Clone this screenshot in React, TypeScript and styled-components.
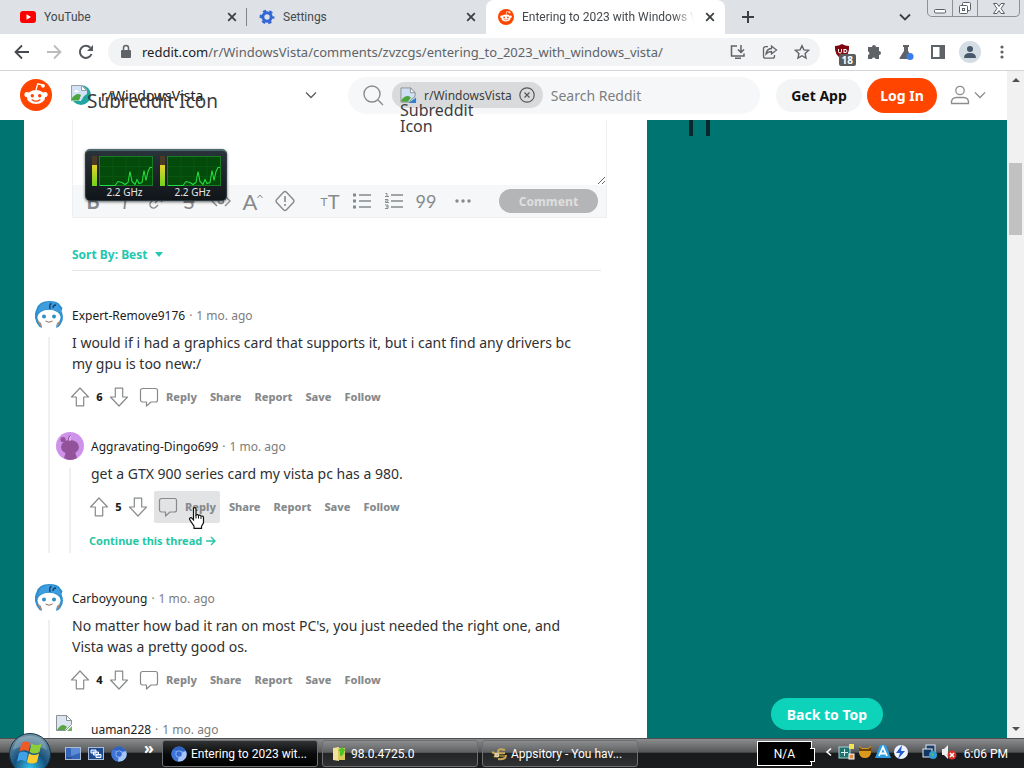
import React from 'react';
import styled, { createGlobalStyle } from 'styled-components';

const ui = '"Noto Sans", "Open Sans", sans-serif';
const TEAL = '#007470';
const MINT = '#0dd3bb';

const GlobalStyle = createGlobalStyle`
  * { box-sizing: border-box; }
  html, body, #root { height: 100%; }
  body { margin: 0; overflow: hidden; font-family: ${ui}; color: #1c1c1c; }
  button, input, textarea { font: inherit; color: inherit; border: 0; padding: 0; margin: 0; background: none; outline: 0; }
  a { color: inherit; text-decoration: none; }
  p, h1 { margin: 0; }
  svg { display: block; flex: none; }
`;

const Screen = styled.div`
  height: 100vh;
  display: flex;
  flex-direction: column;
  position: relative;
  overflow: hidden;
  background: #fff;
`;

/* ---------- browser frame ---------- */
const TabStrip = styled.div`
  height: 34px;
  flex: none;
  display: flex;
  padding-left: 8px;
  background: #dee1e6;
  position: relative;
`;
const Tab = styled.div<{ $active?: boolean; $divider?: boolean }>`
  flex: 0 1 239px;
  min-width: 0;
  display: flex;
  align-items: center;
  gap: 8px;
  padding: 0 7px 0 12px;
  font-family: Roboto, ${ui};
  font-size: 12px;
  color: #45494d;
  border-radius: 8px 8px 0 0;
  background: ${p => (p.$active ? '#fff' : 'transparent')};
  position: relative;
  ${p => p.$divider && `
    &::after { content: ''; position: absolute; right: 0; top: 8px; width: 1px; height: 18px; background: #808488; }
  `}
`;
const TabTitle = styled.span<{ $fade?: boolean }>`
  flex: 1;
  min-width: 0;
  overflow: hidden;
  white-space: nowrap;
  ${p => p.$fade && 'mask-image: linear-gradient(90deg, #000 88%, transparent);'}
`;
const IconButton = styled.button<{ $w?: number }>`
  width: ${p => p.$w ?? 32}px;
  height: 28px;
  flex: none;
  display: flex;
  align-items: center;
  justify-content: center;
  position: relative;
`;
const StripSpacer = styled.div`flex: 1;`;
const TabSearch = styled.div`
  display: flex;
  align-items: center;
  margin-right: 103px;
`;
const NewTab = styled.div`
  display: flex;
  align-items: center;
  margin-left: 7px;
`;
const WindowControls = styled.div`
  position: absolute;
  right: 4px;
  top: 0;
  display: flex;
  height: 17px;
  border: 1px solid #8d9095;
  border-top: 0;
  border-radius: 0 0 5px 5px;
`;
const WindowButton = styled.button<{ $w: number }>`
  width: ${p => p.$w}px;
  display: flex;
  align-items: center;
  justify-content: center;
  & + & { border-left: 1px solid #8d9095; }
`;
const Toolbar = styled.div`
  height: 37px;
  flex: none;
  display: flex;
  align-items: center;
  padding: 0 6px;
  border-bottom: 1px solid #d3d5d8;
`;
const Omnibox = styled.label`
  flex: 1;
  min-width: 0;
  height: 28px;
  margin: 0 6px;
  padding: 0 2px 0 12px;
  display: flex;
  align-items: center;
  border-radius: 14px;
  background: #f1f3f4;
`;
const Address = styled.div`
  flex: 1;
  min-width: 0;
  margin-left: 10px;
  overflow: hidden;
  white-space: nowrap;
  font-size: 13px;
  color: #5f6368;
  b { font-weight: 400; color: #202124; }
`;
const CountBadge = styled.span`
  position: absolute;
  right: 2px;
  bottom: 0;
  padding: 0 3px;
  border-radius: 2px;
  background: #5a5d60;
  color: #fff;
  font-size: 10px;
  line-height: 12px;
  font-weight: 700;
`;
const Profile = styled.span`
  width: 22px;
  height: 22px;
  border-radius: 50%;
  background: #d5dde4;
  display: flex;
  align-items: center;
  justify-content: center;
`;

/* ---------- page ---------- */
const Viewport = styled.div`
  flex: 1;
  min-height: 0;
  display: flex;
`;
const Page = styled.div`
  flex: 1;
  min-width: 0;
  display: flex;
  flex-direction: column;
  position: relative;
`;
const Header = styled.header`
  height: 49px;
  flex: none;
  display: flex;
  align-items: center;
  padding: 0 20px 1px;
  background: #fff;
  position: relative;
  z-index: 2;
`;
const Community = styled.button`
  flex: 0 1 246px;
  margin: 0 31px 0 19px;
  height: 36px;
  display: flex;
  align-items: center;
  gap: 10px;
  position: relative;
  text-align: left;
`;
const CommunityName = styled.span`
  flex: 1;
  font-size: 14px;
`;
const CommunityAlt = styled.span`
  position: absolute;
  left: 16px;
  top: 11px;
  font-size: 19px;
  line-height: 26px;
  white-space: nowrap;
  color: #3c3d3e;
`;
const Search = styled.div`
  flex: 1;
  min-width: 0;
  height: 37px;
  display: flex;
  align-items: center;
  padding-left: 14px;
  border-radius: 19px;
  background: #f6f7f8;
`;
const Chip = styled.div`
  height: 26px;
  margin: 0 8px;
  padding: 0 8px;
  display: flex;
  align-items: center;
  gap: 7px;
  border-radius: 13px;
  background: #d9dadb;
  font-size: 12px;
  color: #3c3d3e;
  position: relative;
`;
const ChipAlt = styled.span`
  position: absolute;
  left: 8px;
  top: 20px;
  width: 80px;
  font-size: 16px;
  line-height: 16px;
`;
const SearchInput = styled.input`
  flex: 1;
  min-width: 0;
  font-size: 14px;
  &::placeholder { color: #7c7f82; opacity: 1; }
`;
const Pill = styled.button<{ $kind: 'plain' | 'login' | 'top' | 'comment' }>`
  flex: none;
  border-radius: 18px;
  font-weight: 700;
  font-size: 14px;
  ${p => p.$kind === 'plain' && 'height: 33px; width: 86px; margin: 0 5px 0 16px; background: #f3f4f5; color: #111;'}
  ${p => p.$kind === 'login' && 'height: 35px; width: 70px; background: #ff4500; color: #fff;'}
  ${p => p.$kind === 'top' && `height: 32px; width: 112px; background: ${MINT}; color: #fff;`}
  ${p => p.$kind === 'comment' && 'height: 24px; width: 99px; background: #b4b5b6; color: #dcdddd; font-size: 12px; font-weight: 800;'}
`;
const UserMenu = styled.button`
  display: flex;
  align-items: center;
  gap: 4px;
  margin: 0 1px 0 13px;
`;
const Body = styled.div`
  flex: 1;
  min-height: 0;
  padding-left: 24px;
  display: grid;
  grid-template-columns: 623fr 360fr;
  background: ${TEAL};
  overflow: hidden;
`;
const Thread = styled.main`
  background: #fff;
  overflow: hidden;
  min-width: 0;
`;
const Backdrop = styled.aside`
  position: relative;
`;
const BannerStroke = styled.i<{ $x: number }>`
  position: absolute;
  left: ${p => p.$x}px;
  top: 0;
  width: 4px;
  height: 16px;
  background: #06282e;
`;
const BackToTop = styled.div`
  position: absolute;
  left: 0;
  right: 0;
  bottom: 8px;
  display: flex;
  justify-content: center;
`;
const Editor = styled.section`
  margin: 0 40px 0 48px;
  border: 1px solid #edeff1;
  border-top: 0;
  display: flex;
  flex-direction: column;
`;
const CommentBox = styled.textarea`
  width: 100%;
  height: 65px;
  resize: vertical;
  display: block;
`;
const EditorBar = styled.div`
  height: 32px;
  padding: 0 8px 0 4px;
  display: flex;
  align-items: center;
  background: #f6f7f8;
  color: #878a8c;
`;
const Tool = styled.button<{ $size?: number; $weight?: number; $italic?: boolean; $strike?: boolean }>`
  flex: 0 1 32px;
  min-width: 0;
  height: 32px;
  display: flex;
  align-items: center;
  justify-content: center;
  font-family: Lato, sans-serif;
  font-size: ${p => p.$size ?? 20}px;
  font-weight: ${p => p.$weight ?? 400};
  font-style: ${p => (p.$italic ? 'italic' : 'normal')};
  text-decoration: ${p => (p.$strike ? 'line-through' : 'none')};
  small { font-size: 12px; align-self: center; }
`;
const ToolGap = styled.span<{ $w: number }>`
  flex: 0 1 ${p => p.$w}px;
`;
const Sort = styled.div`
  margin: 24px 46px 0 48px;
  height: 29px;
  border-bottom: 1px solid #e4e6e8;
  button { display: flex; align-items: center; gap: 6px; height: 24px; font-size: 12px; font-weight: 700; color: #24c7b0; }
`;
const Comments = styled.div`
  padding: 30px 60px 0 11px;
  display: flex;
  flex-direction: column;
  gap: 31px;
`;
const CommentRow = styled.article<{ $nested?: boolean }>`
  display: flex;
  gap: ${p => (p.$nested ? 7 : 9)}px;
  margin: ${p => (p.$nested ? '19px 0 0 -16px' : '0')};
`;
const Gutter = styled.div`
  width: 28px;
  flex: none;
  display: flex;
  flex-direction: column;
  align-items: center;
`;
const ThreadLine = styled.div`
  flex: 1;
  width: 2px;
  margin-top: 8px;
  background: #edeff1;
`;
const CommentMain = styled.div`
  flex: 1;
  min-width: 0;
`;
const Meta = styled.div`
  height: 28px;
  display: flex;
  align-items: center;
  gap: 4px;
  font-size: 12px;
  color: #7c7c7c;
  a { color: #1c1c1c; font-size: 12px; }
`;
const Text = styled.p`
  margin: 3px 0 7px;
  font-size: 14px;
  line-height: 21px;
  color: #2f3031;
`;
const Actions = styled.div`
  height: 32px;
  margin-left: -4px;
  display: flex;
  align-items: center;
  font-size: 11px;
  line-height: 14px;
  font-weight: 800;
  color: #878a8c;
`;
const Vote = styled.button`
  width: 24px;
  height: 24px;
  display: flex;
  align-items: center;
  justify-content: center;
`;
const Score = styled.span`
  width: 15px;
  text-align: center;
  color: #1c1c1c;
`;
const Reply = styled.button<{ $hover?: boolean }>`
  height: 32px;
  margin-left: 4px;
  padding: 0 4px;
  display: flex;
  align-items: center;
  gap: 7px;
  border-radius: 2px;
  background: ${p => (p.$hover ? '#e2e3e4' : 'transparent')};
  position: relative;
`;
const Action = styled.button`
  height: 24px;
  padding: 0 4px;
  margin-left: 5px;
`;
const Pointer = styled.svg`
  position: absolute;
  left: 34px;
  top: 16px;
  z-index: 1;
`;
const Continue = styled.a`
  display: flex;
  align-items: center;
  gap: 4px;
  height: 22px;
  margin: 7px 0 1px -2px;
  font-size: 11px;
  line-height: 14px;
  font-weight: 700;
  color: #24c7a5;
`;
const Scrollbar = styled.div`
  width: 17px;
  flex: none;
  display: flex;
  flex-direction: column;
  align-items: center;
  padding: 6px 0;
  background: #f1f1f1;
`;
const Thumb = styled.div`
  width: 13px;
  height: 72px;
  margin: 80px 0 auto;
  background: #c1c1c1;
`;

/* ---------- desktop ---------- */
const Gadget = styled.div`
  position: absolute;
  left: 85px;
  top: 149px;
  z-index: 3;
  display: flex;
  gap: 7px;
  padding: 5px 5px 0 6px;
  height: 52px;
  border: 1px solid #2c3940;
  border-top: 2px solid #4b686d;
  border-radius: 5px;
  background: linear-gradient(#29333a, #101519);
  box-shadow: 0 1px 3px rgba(0, 0, 0, .6);
`;
const Core = styled.figure`
  margin: 0;
  width: 61px;
  color: #e4e7e8;
  font-size: 10px;
  line-height: 10px;
  text-align: center;
  figcaption { padding-left: 4px; white-space: nowrap; }
`;
const Taskbar = styled.footer`
  height: 30px;
  flex: none;
  display: flex;
  align-items: center;
  position: relative;
  z-index: 4;
  color: #fff;
  font-family: Roboto, ${ui};
  font-size: 12px;
  border-top: 1px solid #4c4e4f;
  background: linear-gradient(#8a8c8d 0, #555758 45%, #17191a 50%, #1b1d1e 100%);
`;
const StartButton = styled.button`
  position: absolute;
  left: 8px;
  top: -6px;
`;
const QuickLaunch = styled.div`
  display: flex;
  align-items: center;
  gap: 7px;
  margin-left: 65px;
  button { display: flex; }
`;
const More = styled.button`
  width: 10px;
  margin: 0 8px 12px 17px;
  font-family: ${ui};
  font-size: 16px;
  line-height: 16px;
  font-weight: 700;
`;
const TaskButton = styled.button<{ $active?: boolean }>`
  flex: 0 1 156px;
  min-width: 0;
  height: 27px;
  margin-right: 4px;
  padding: 0 8px;
  display: flex;
  align-items: center;
  gap: 4px;
  white-space: nowrap;
  border: 1px solid #6d6f70;
  border-radius: 3px;
  background: ${p => (p.$active
    ? 'linear-gradient(#303233, #0b0c0d 50%, #000)'
    : 'linear-gradient(#8b8d8e, #5e6061 45%, #232526 50%, #303233)')};
`;
const Tray = styled.div`
  margin-left: auto;
  display: flex;
  align-items: center;
  gap: 2px;
  padding-right: 16px;
`;
const TrayIcons = styled.div`
  display: flex;
  align-items: center;
  gap: 2px;
  margin-bottom: 3px;
`;
const Battery = styled.div`
  width: 55px;
  height: 25px;
  margin-right: 11px;
  display: flex;
  align-items: center;
  justify-content: center;
  border: 1px solid #fff;
  background: #000;
  position: relative;
  &::after { content: ''; position: absolute; right: -4px; top: 6px; width: 4px; height: 12px; background: #000; border: 1px solid #fff; border-left: 0; }
`;
const Clock = styled.time`
  margin-left: 5px;
  white-space: nowrap;
`;

/* ---------- drawings ---------- */
const Cross = () => (
  <svg width="10" height="10" viewBox="0 0 10 10" stroke="#3c4043" strokeWidth="1.8"><path d="M1.2 1.2l7.6 7.6M8.8 1.2L1.2 8.8" /></svg>
);
const Snoo = ({ size }: { size: number }) => (
  <svg width={size} height={size} viewBox="0 0 32 32">
    <circle cx="16" cy="16" r="16" fill="#ff4500" />
    <path d="M16 11l1.7-6.2 5 1.2" fill="none" stroke="#fff" strokeWidth="1.3" />
    <circle cx="23" cy="6.8" r="1.9" fill="#fff" />
    <circle cx="7" cy="15.5" r="2.6" fill="#fff" /><circle cx="25" cy="15.5" r="2.6" fill="#fff" />
    <ellipse cx="16" cy="18" rx="9.2" ry="6.9" fill="#fff" />
    <circle cx="12.3" cy="16.8" r="1.7" fill="#ff4500" /><circle cx="19.7" cy="16.8" r="1.7" fill="#ff4500" />
    <path d="M12 20.8q4 2.8 8 0" fill="none" stroke="#ff4500" strokeWidth="1.2" strokeLinecap="round" />
  </svg>
);
const Broken = () => (
  <svg width="20" height="20" viewBox="0 0 20 20">
    <circle cx="10" cy="10" r="10" fill="#22a5a0" />
    <path d="M0 0h11l5 5v4l-3 2-3 5H0z" fill="#d3e3f5" />
    <path d="M.5 16V.5h10l5 5" fill="none" stroke="#9aa1a6" />
    <path d="M1 13q5-6 9-3l-2 5.500H1z" fill="#4ca43d" />
    <path d="M3 7q2-4 5 0z" fill="#fff" /><path d="M10.500 .5v5h5z" fill="#fff" stroke="#9aa1a6" />
  </svg>
);
const Chevron = ({ w = 12, color = '#5b5d5f', s = 1.3 }: { w?: number; color?: string; s?: number }) => (
  <svg width={w} height={w} viewBox="0 0 12 12" fill="none" stroke={color} strokeWidth={s}><path d="M1 3.500l5 5 5-5" /></svg>
);
const BlueAvatar = () => (
  <svg width="28" height="28" viewBox="0 0 28 28">
    <path d="M14 0q9 0 11 4l2.500 3-1 3q4 9-3 16l-3 1H7.500l-3-1Q-3 17 1.500 8 4 0 14 0z" fill="#2f8fd0" />
    <path d="M6 22h16l-1 5q-7 2-14 0z" fill="#fff" />
    <path d="M3.500 20l2.500 5M24.500 20L22 25" stroke="#c98a63" strokeWidth="1.500" />
    <ellipse cx="14" cy="16.500" rx="11.500" ry="7.800" fill="#fff" />
    <path d="M2 12Q5 1 14 1q10 0 12.500 11-6-4-12-3.500Q7 8.500 2 12z" fill="#3e9ddc" />
    <path d="M15 8q-1-5 1.500-5.500M18 7q0-3 3-3" fill="none" stroke="#163a68" strokeWidth="1.300" />
    <circle cx="9" cy="15.500" r="2" fill="#2c8fc9" /><circle cx="19" cy="15.500" r="2" fill="#2c8fc9" />
    <path d="M10.500 20q3.500 2.500 7 0" fill="none" stroke="#8b6a5b" />
  </svg>
);
const PurpleAvatar = () => (
  <svg width="28" height="28" viewBox="0 0 28 28">
    <circle cx="14" cy="14" r="14" fill="#cf92ea" />
    <g fill="#93539b"><ellipse cx="14" cy="15" rx="9" ry="7" /><circle cx="7" cy="7.500" r="2.600" /><path d="M10 20h9l2 6q-7 4-13 0z" /></g>
    <path d="M8 8l4 4M13 9q-1-5 2-5" fill="none" stroke="#93539b" strokeWidth="1.400" />
    <path d="M14 9q-1-4 1-5" fill="none" stroke="#f2dcfa" />
  </svg>
);
const Arrow = ({ down }: { down?: boolean }) => (
  <svg width="20" height="20" viewBox="0 0 20 20" fill="none" stroke="#878a8c" strokeWidth="1.200" strokeLinejoin="round">
    <path d={down ? 'M10 19l-8.500-9H6.300V1.200h7.400V10h4.800z' : 'M10 1l8.500 9h-4.800v8.800H6.300V10H1.500z'} />
  </svg>
);
const Bubble = () => (
  <svg width="20" height="20" viewBox="0 0 20 20" fill="none" stroke="#878a8c" strokeWidth="1.200" strokeLinejoin="round">
    <path d="M3.500 1.500h13a2 2 0 0 1 2 2V13a2 2 0 0 1-2 2H12l-4.500 4V15h-4a2 2 0 0 1-2-2V3.500a2 2 0 0 1 2-2z" />
  </svg>
);
const ListIcon = ({ numbered }: { numbered?: boolean }) => (
  <svg width="20" height="18" viewBox="0 0 20 18" stroke="#878a8c" strokeWidth="1.400" fill="none">
    <path d="M7 3h12M7 9h12M7 15h12" />
    {numbered
      ? <path strokeWidth="1" d="M1.500 1.500H3v3M1 4.500h4M1 7.500h3v1.500H1.500v1.500H5M1 13h3v3.500H1M2 14.800h2" />
      : <path strokeWidth="3" d="M1 3h3M1 9h3M1 15h3" />}
  </svg>
);
const Chromium = () => (
  <svg width="16" height="16" viewBox="0 0 16 16">
    <circle cx="8" cy="8" r="7.500" fill="#4a86e8" /><path d="M8 8L1.500 4A7.500 7.500 0 0 0 7 15.500z" fill="#3f74d8" />
    <path d="M8 8l-1 7.500A7.500 7.500 0 0 0 15 5z" fill="#a5c5f8" /><path d="M1.500 4Q4 .5 8 .5T14.800 5H8z" fill="#2f62c0" /><circle cx="8" cy="8" r="3.500" fill="#9dbdf3" /><circle cx="8" cy="8" r="2.700" fill="#3569d4" />
  </svg>
);
const Orb = () => (
  <svg width="44" height="36" viewBox="0 0 44 36">
    <defs><radialGradient id="orb" cx=".5" cy=".85" r=".8"><stop stopColor="#35c3ed" /><stop offset=".5" stopColor="#15517c" /><stop offset="1" stopColor="#6c91a5" /></radialGradient></defs>
    <circle cx="22" cy="21" r="20.500" fill="url(#orb)" stroke="#173345" />
    <path d="M5 17q2-14 17-14t17 14q-17-9-34 0z" fill="#fff" opacity=".22" />
    <path d="M13.500 10q5-3 9 0l-2 8.500q-4-3-9 0z" fill="#f05a28" /><path d="M23.500 10.500q5 3 10 0l-2 8.500q-5 3-10 0z" fill="#8dcc3a" />
    <path d="M11 20q4-3 9 0l-2 8.500q-5-3-9 0z" fill="#3fa2e8" /><path d="M21 20.500q5 3 10 0l-2 8.500q-5 3-10 0z" fill="#fecb2f" />
  </svg>
);
const CoreGraph = () => (
  <svg width="61" height="31" viewBox="0 0 61 31">
    <defs><linearGradient id="lvl" x2="0" y2="1"><stop stopColor="#e8d12c" /><stop offset="1" stopColor="#6fd41c" /></linearGradient></defs>
    <rect y="0" width="5" height="9" fill="#4b3a24" /><rect y="9" width="5" height="21" fill="url(#lvl)" />
    <rect x="7.500" y=".5" width="53" height="29" fill="#034a0b" stroke="#167d22" />
    <path d="M8 10.500h52M8 20.500h52M21 1v28M34 1v28M47 1v28" stroke="#07570f" />
    <path d="M8 29.500h15l3-4 4 1 3 2 3-2 2-11 2 10 3 3 2-5 2 4 3-1 2-12 2 10 2-9 2-4h2" fill="none" stroke="#23dd3c" strokeWidth="1.100" />
  </svg>
);

type CommentProps = {
  author: string;
  text?: string;
  score?: number;
  avatar: React.ReactNode;
  nested?: boolean;
  hoverReply?: boolean;
  children?: React.ReactNode;
};

const Comment = ({ author, text, score, avatar, nested, hoverReply, children }: CommentProps) => (
  <CommentRow $nested={nested}>
    <Gutter>{avatar}<ThreadLine /></Gutter>
    <CommentMain>
      <Meta><a href="#user">{author}</a><span>·</span><span>1 mo. ago</span></Meta>
      {text && (
        <>
          <Text>{text}</Text>
          <Actions>
            <Vote aria-label="Upvote"><Arrow /></Vote>
            <Score>{score}</Score>
            <Vote aria-label="Downvote"><Arrow down /></Vote>
            <Reply $hover={hoverReply}>
              <Bubble />Reply
              {hoverReply && (
                <Pointer width="18" height="22" viewBox="0 0 18 22">
                  <path d="M5.500 1q2-1 2.500 1v6q2-1 2.500 .5 2-1 2.500 .8 2.500-.8 2.500 1.500v5l-2 3.500v2H6v-2l-4.500-7q0-2 2-1.500l2 2z" fill="#fff" stroke="#111" strokeWidth="1.200" />
                  <path d="M8 8v3.500M10.500 9v2.500M13 10v2" stroke="#111" />
                </Pointer>
              )}
            </Reply>
            {['Share', 'Report', 'Save', 'Follow'].map(a => <Action key={a}>{a}</Action>)}
          </Actions>
        </>
      )}
      {children}
    </CommentMain>
  </CommentRow>
);

const g = '#5f6368';

export default function App() {
  return (
    <Screen>
      <GlobalStyle />
      <TabStrip>
        <Tab $divider>
          <svg width="16" height="16" viewBox="0 0 16 16"><rect y="2" width="16" height="12" rx="3" fill="#f00" /><path d="M6.500 5.300L11 8l-4.500 2.700z" fill="#fff" /></svg>
          <TabTitle>YouTube</TabTitle>
          <IconButton $w={16} aria-label="Close tab"><Cross /></IconButton>
        </Tab>
        <Tab>
          <svg width="16" height="16" viewBox="0 0 16 16" fill="none" stroke="#3367d6"><circle cx="8" cy="8" r="4.200" strokeWidth="3" /><circle cx="8" cy="8" r="6.200" strokeWidth="2.400" strokeDasharray="3.250 3.250" strokeDashoffset="1.600" /></svg>
          <TabTitle>Settings</TabTitle>
          <IconButton $w={16} aria-label="Close tab"><Cross /></IconButton>
        </Tab>
        <Tab $active>
          <Snoo size={16} />
          <TabTitle $fade>Entering to 2023 with Windows Vista</TabTitle>
          <IconButton $w={16} aria-label="Close tab"><Cross /></IconButton>
        </Tab>
        <NewTab><IconButton aria-label="New tab"><svg width="12" height="12" stroke="#3c4043" strokeWidth="2"><path d="M6 0v12M0 6h12" /></svg></IconButton></NewTab>
        <StripSpacer />
        <TabSearch><IconButton aria-label="Search tabs"><Chevron color="#3c4043" s={1.8} /></IconButton></TabSearch>
        <WindowControls>
          <WindowButton $w={24} aria-label="Minimize"><svg width="12" height="13"><rect x=".5" y="7.500" width="11" height="3.500" rx="1" fill="#fff" stroke="#5c6066" /></svg></WindowButton>
          <WindowButton $w={25} aria-label="Restore"><svg width="13" height="13" fill="#fff" stroke="#5c6066"><rect x="3.500" y=".5" width="8" height="8" rx="1" /><rect x=".5" y="3.500" width="8" height="8" rx="1" /><rect x="3.500" y="6.500" width="2" height="2" /></svg></WindowButton>
          <WindowButton $w={42} aria-label="Close"><svg width="12" height="11" fill="#fff" stroke="#5c6066"><path d="M.5 .5h3.500l2 3 2-3h3.500l-3.500 5 3.500 5H8l-2-3-2 3H.5l3.500-5z" /></svg></WindowButton>
        </WindowControls>
      </TabStrip>

      <Toolbar>
        <IconButton aria-label="Back"><svg width="16" height="16" fill="none" stroke="#46494d" strokeWidth="1.800"><path d="M15 8H2M8 1.500L1.500 8 8 14.500" /></svg></IconButton>
        <IconButton aria-label="Forward"><svg width="16" height="16" fill="none" stroke="#b9bbbd" strokeWidth="1.800"><path d="M1 8h13M8 1.500L14.500 8 8 14.500" /></svg></IconButton>
        <IconButton aria-label="Reload"><svg width="16" height="16" fill="none" stroke="#55585c" strokeWidth="2"><path d="M13.500 10A6 6 0 1 1 12.300 3.800" /><path d="M15 1v6H9z" fill="#55585c" stroke="none" /></svg></IconButton>
        <Omnibox>
          <svg width="12" height="16" viewBox="0 0 12 16"><rect x="1" y="6" width="10" height="8" rx="1" fill={g} /><path d="M3.500 6V4a2.500 2.500 0 0 1 5 0v2" fill="none" stroke={g} strokeWidth="1.500" /></svg>
          <Address><b>reddit.com</b>/r/WindowsVista/comments/zvzcgs/entering_to_2023_with_windows_vista/</Address>
          <IconButton aria-label="Install"><svg width="16" height="16" fill="none" stroke={g} strokeWidth="1.500"><path d="M7 2H1.500v10H14V9.500M5 14.200h6M11 1v7M8 5.500l3 3 3-3" /></svg></IconButton>
          <IconButton aria-label="Share"><svg width="16" height="16" fill="none" stroke={g} strokeWidth="1.300"><path d="M6 2.700H3.500a2 2 0 0 0-2 2v7.500a2 2 0 0 0 2 2h7a2 2 0 0 0 2-2V11M9.500 2v2.500Q4.500 5 4 10q2-2.500 5.500-2.500V10l5-4z" /></svg></IconButton>
          <IconButton aria-label="Bookmark"><svg width="16" height="16" fill="none" stroke={g} strokeWidth="1.400"><path d="M8 1.700l1.900 4.200 4.600.5-3.400 3.100.9 4.500-4-2.300L4 14l.9-4.500L1.500 6.400l4.600-.5z" /></svg></IconButton>
        </Omnibox>
        <IconButton aria-label="uBlock Origin">
          <svg width="16" height="18" viewBox="0 0 16 18"><path d="M8 1q3 2 7 2 1 9-7 13Q0 12 1 3q4 0 7-2z" fill="#800610" /><path d="M4.500 6v2.500q0 1.500 1.500 1.500t1.500-1.500V6M10 6v4M10 6.500q3-.5 3 1.500t-3 1.500" fill="none" stroke="#fff" /></svg>
          <CountBadge>18</CountBadge>
        </IconButton>
        <IconButton aria-label="Extensions"><svg width="16" height="16" fill={g}><path d="M6 3a2 2 0 0 1 4 0h3v4a2 2 0 0 1 0 4v4H9.500a1.800 1.800 0 0 0-3.500 0H2v-4a1.800 1.800 0 0 0 0-3.500V3z" /></svg></IconButton>
        <IconButton aria-label="Experiments"><svg width="16" height="16"><path d="M5 1h6v2h-1v4l4.500 7q0 1-1 1h-11q-1 0-1-1L6 7V3H5z" fill={g} /><circle cx="12" cy="12.500" r="3.500" fill="#3b7de8" /></svg></IconButton>
        <IconButton aria-label="Side panel"><svg width="14" height="14"><rect x="1" y="1" width="12" height="12" fill="none" stroke={g} strokeWidth="2" /><rect x="8.500" y="1" width="5" height="12" fill={g} /></svg></IconButton>
        <IconButton aria-label="Profile"><Profile><svg width="12" height="12" fill="#46586a"><circle cx="6" cy="3" r="3" /><path d="M0 12q0-5 6-5t6 5z" /></svg></Profile></IconButton>
        <IconButton aria-label="Menu"><svg width="4" height="14" fill={g}><circle cx="2" cy="2" r="1.600" /><circle cx="2" cy="7" r="1.600" /><circle cx="2" cy="12" r="1.600" /></svg></IconButton>
      </Toolbar>

      <Viewport>
        <Page>
          <Header>
            <a href="#home" aria-label="Reddit home"><Snoo size={32} /></a>
            <Community>
              <Broken />
              <CommunityName>r/WindowsVista</CommunityName>
              <CommunityAlt>Subreddit Icon</CommunityAlt>
              <Chevron />
            </Community>
            <Search>
              <svg width="22" height="22" fill="none" stroke="#8a8c8e" strokeWidth="1.400"><circle cx="10" cy="10" r="8" /><path d="M16 16l5 5" /></svg>
              <Chip>
                <svg width="17" height="17" viewBox="0 0 18 18"><path d="M1 1h10l5 5v4l-4 3-2 3H1z" fill="#cfe0f5" stroke="#8b9195" /><path d="M1.500 14q5-7 10-3l-3 4.500h-7z" fill="#4ca43d" /><path d="M17 11v6h-8z" fill="#2f7fd0" /><path d="M11 1v5h5z" fill="#fff" stroke="#8b9195" /></svg>
                <span>r/WindowsVista</span>
                <svg width="16" height="16" fill="none" stroke="#55575a" strokeWidth="1.200"><circle cx="8" cy="8" r="7.200" /><path d="M5.500 5.500l5 5M10.500 5.500l-5 5" /></svg>
                <ChipAlt>Subreddit Icon</ChipAlt>
              </Chip>
              <SearchInput placeholder="Search Reddit" aria-label="Search Reddit" />
            </Search>
            <Pill $kind="plain">Get App</Pill>
            <Pill $kind="login">Log In</Pill>
            <UserMenu aria-label="User menu">
              <svg width="20" height="20" fill="none" stroke="#8b8d8f" strokeWidth="1.300"><circle cx="10" cy="5.500" r="4.200" /><path d="M1.500 18.500q-.5-6 5-6h7q5.500 0 5 6z" /></svg>
              <Chevron color="#8b8d8f" />
            </UserMenu>
          </Header>

          <Body>
            <Thread>
              <Editor>
                <CommentBox aria-label="Comment text" />
                <EditorBar>
                  <Tool $weight={700}>B</Tool>
                  <Tool $italic>i</Tool>
                  <Tool aria-label="Link"><svg width="18" height="18" fill="none" stroke="#878a8c" strokeWidth="1.400"><path d="M7 11l5-5M8 5l2-2a3.500 3.500 0 0 1 5 5l-2 2M10 13l-2 2a3.500 3.500 0 0 1-5-5l2-2" /></svg></Tool>
                  <Tool $strike>S</Tool>
                  <Tool aria-label="Code"><svg width="20" height="16" fill="none" stroke="#878a8c" strokeWidth="1.400"><path d="M6 3L1 8l5 5M14 3l5 5-5 5" /><circle cx="10" cy="8" r="2.500" /></svg></Tool>
                  <Tool $size={22}>A<svg width="6" height="14" fill="none" stroke="#878a8c"><path d="M.5 4L3 1l2.500 3" /></svg></Tool>
                  <Tool aria-label="Spoiler"><svg width="22" height="22" fill="none" stroke="#878a8c" strokeWidth="1.400"><path d="M9.500 2.200q1.500-1.400 3 0l6.800 7.300q1.300 1.500 0 3l-6.800 7.300q-1.500 1.400-3 0L2.700 12.500q-1.300-1.500 0-3z" /><path d="M11 6v6M11 14v2" strokeWidth="1.600" /></svg></Tool>
                  <ToolGap $w={13} />
                  <Tool><small>T</small>T</Tool>
                  <Tool aria-label="Bulleted list"><ListIcon /></Tool>
                  <Tool aria-label="Numbered list"><ListIcon numbered /></Tool>
                  <Tool $size={18}>99</Tool>
                  <ToolGap $w={5} />
                  <Tool aria-label="More"><svg width="16" height="4" fill="#878a8c"><circle cx="2" cy="2" r="1.700" /><circle cx="8" cy="2" r="1.700" /><circle cx="14" cy="2" r="1.700" /></svg></Tool>
                  <StripSpacer />
                  <Pill $kind="comment">Comment</Pill>
                </EditorBar>
              </Editor>
              <Sort><button>Sort By: Best<svg width="10" height="6" fill="#24c7b0"><path d="M1 1h8L5 6z" /></svg></button></Sort>
              <Comments>
                <Comment avatar={<BlueAvatar />} author="Expert-Remove9176" score={6}
                  text="I would if i had a graphics card that supports it, but i cant find any drivers bc my gpu is too new:/">
                  <Comment nested hoverReply avatar={<PurpleAvatar />} author="Aggravating-Dingo699" score={5}
                    text="get a GTX 900 series card my vista pc has a 980.">
                    <Continue href="#thread">Continue this thread
                      <svg width="10" height="10" fill="none" stroke="#24c7a5" strokeWidth="1.400"><path d="M0 5h9M5 1l4 4-4 4" /></svg>
                    </Continue>
                  </Comment>
                </Comment>
                <Comment avatar={<BlueAvatar />} author="Carboyyoung" score={4}
                  text="No matter how bad it ran on most PC's, you just needed the right one, and Vista was a pretty good os.">
                  <Comment nested author="uaman228" avatar={<svg width="28" height="28"><path d="M.5 .5h10l5 5v4l-4 4-2 2h-9z" fill="#dbe5ef" stroke="#8b9195" /><path d="M1 15q5-8 10-3l-2 3z" fill="#59a547" /><path d="M16 11v5h-5z" fill="#6db35e" /><path d="M10.500 .5v5h5z" fill="#fff" stroke="#8b9195" /></svg>} />
                </Comment>
              </Comments>
            </Thread>
            <Backdrop>
              <BannerStroke $x={42} />
              <BannerStroke $x={59} />
              <BackToTop><Pill $kind="top">Back to Top</Pill></BackToTop>
            </Backdrop>
          </Body>
        </Page>
        <Scrollbar>
          <svg width="8" height="6" fill="#505050"><path d="M0 5h8L4 1z" /></svg>
          <Thumb />
          <svg width="8" height="6" fill="#505050"><path d="M0 1h8L4 5z" /></svg>
        </Scrollbar>
      </Viewport>

      <Gadget>
        <Core><CoreGraph /><figcaption>2.2 GHz</figcaption></Core>
        <Core><CoreGraph /><figcaption>2.2 GHz</figcaption></Core>
      </Gadget>

      <Taskbar>
        <StartButton aria-label="Start"><Orb /></StartButton>
        <QuickLaunch>
          <button aria-label="Show desktop"><svg width="16" height="14"><rect x=".5" y=".5" width="15" height="12" fill="#3465b8" stroke="#a9bcd4" /><path d="M6 1h9v5L6 9z" fill="#5b8ad6" /><path d="M1 11h6" stroke="#203f74" /></svg></button>
          <button aria-label="Switch windows"><svg width="16" height="14"><rect x=".5" y=".5" width="15" height="12" fill="#1d4a92" stroke="#a9bcd4" /><path d="M3 3h5v3H3zM5.500 5h5v3h-5zM8 7.500h5v3H8z" fill="#5b8ad6" stroke="#fff" /></svg></button>
          <button aria-label="Chromium"><Chromium /></button>
        </QuickLaunch>
        <More aria-label="More shortcuts">»</More>
        <TaskButton $active><Chromium />Entering to 2023 wit...</TaskButton>
        <TaskButton><svg width="16" height="16"><path d="M2 2l6-1v14l-6-1z" fill="#efe39a" /><path d="M7 2h7v12H7z" fill="#d9c85b" /><path d="M9 10V5H7l4-4 4 4h-2q0 5-4 5z" fill="#4cc22a" /></svg>98.0.4725.0</TaskButton>
        <TaskButton><svg width="16" height="16" fill="none" strokeWidth="2"><path d="M1 6l4 2M3 11l3-2M14 4q-6-2-7 1 0 3 7 2M15 9q0 5-8 4" stroke="#c8a75a" /><circle cx="6" cy="9" r="1.500" stroke="#e3d2a7" /><path d="M9 10h5" stroke="#876b29" /></svg>Appsitory - You hav...</TaskButton>
        <Tray>
          <Battery>N/A</Battery>
          <TrayIcons>
            <svg width="8" height="10" fill="none" stroke="#fff" strokeWidth="1.600"><path d="M6 1.500L2 5l4 3.500" /></svg>
            <svg width="20" height="16"><rect x="4" y="3" width="11" height="11" fill="#1f7370" stroke="#a9d6cf" /><path d="M9.500 5v7M6 8.500h7" stroke="#d6f1ea" /><rect x="14" y="0" width="5" height="5" fill="#f5e25a" /><rect x="14" y="10" width="5" height="5" fill="#e08a45" stroke="#fff" /></svg>
            <svg width="16" height="16"><path d="M2 2l3 2h6l3-2v7q-1 5-6 5T2 9z" fill="#d99a1c" /><path d="M2 3l3 2h6l3-2v4H2z" fill="#6a430d" /></svg>
            <svg width="16" height="16"><path d="M5 1h6l5 13H0z" fill="#2c9be0" /><path d="M4 12L8 3l4 9M5.500 9.500h5" stroke="#fff" strokeWidth="1.800" fill="none" /></svg>
            <svg width="16" height="16"><circle cx="8" cy="8" r="7" fill="#eef3ff" /><path d="M9 1L3 9h4l-2 6 7-8H8z" fill="#2359cc" /></svg>
            <svg width="28" height="16"><rect x="15" y="1" width="9" height="8" fill="#1b3b66" stroke="#e2ebf3" /><rect x="12" y="5" width="9" height="8" fill="#12365f" stroke="#e2ebf3" /><circle cx="22" cy="11" r="4" fill="#2e9bd8" /><path d="M20 9l3 1-1 3z" fill="#59c255" /></svg>
            <svg width="16" height="16"><path d="M1 5h2l4-4v14l-4-4H1z" fill="#eceeef" /><circle cx="11" cy="11" r="4.500" fill="#d8302b" /><path d="M9 9l4 4M13 9l-4 4" stroke="#fff" strokeWidth="1.500" /></svg>
          </TrayIcons>
          <Clock>6:06 PM</Clock>
        </Tray>
      </Taskbar>
    </Screen>
  );
}
